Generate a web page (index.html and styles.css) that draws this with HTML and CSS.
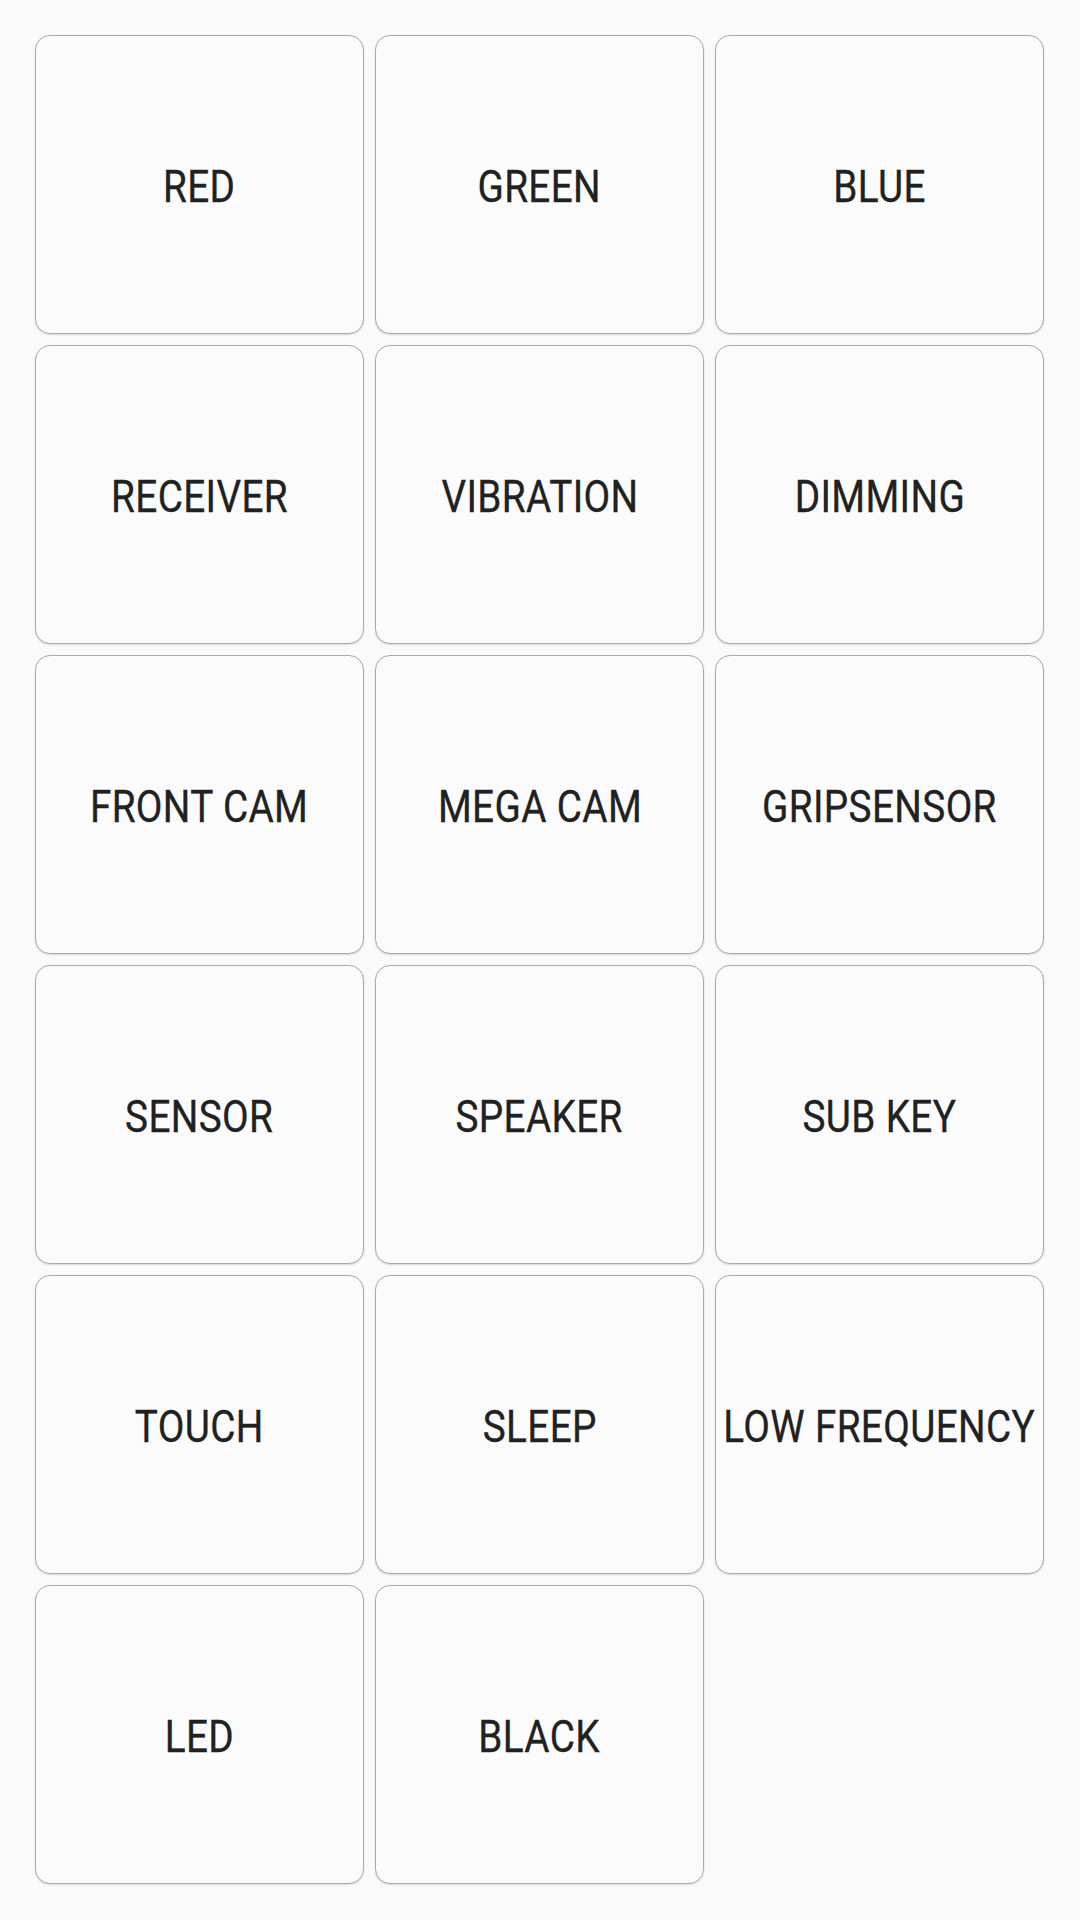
FILE: index.html
```html
<!DOCTYPE html>
<html>
<head>
<meta charset="utf-8">
<link rel="stylesheet" href="styles.css">
</head>
<body>
<div class="grid">
  <div class="card"><span class="label">RED</span></div>
  <div class="card"><span class="label">GREEN</span></div>
  <div class="card"><span class="label">BLUE</span></div>
  <div class="card"><span class="label">RECEIVER</span></div>
  <div class="card"><span class="label">VIBRATION</span></div>
  <div class="card"><span class="label">DIMMING</span></div>
  <div class="card"><span class="label">FRONT CAM</span></div>
  <div class="card"><span class="label">MEGA CAM</span></div>
  <div class="card"><span class="label">GRIPSENSOR</span></div>
  <div class="card"><span class="label">SENSOR</span></div>
  <div class="card"><span class="label">SPEAKER</span></div>
  <div class="card"><span class="label">SUB KEY</span></div>
  <div class="card"><span class="label">TOUCH</span></div>
  <div class="card"><span class="label">SLEEP</span></div>
  <div class="card"><span class="label">LOW FREQUENCY</span></div>
  <div class="card"><span class="label">LED</span></div>
  <div class="card"><span class="label">BLACK</span></div>
</div>
</body>
</html>
```

FILE: styles.css
```css
html, body {
  margin: 0;
  padding: 0;
  background: #fafafa;
}
body {
  width: 1080px;
  height: 1920px;
  font-family: Roboto, "Noto Sans", sans-serif;
}
.grid {
  display: grid;
  grid-template-columns: repeat(3, 329px);
  grid-auto-rows: 299px;
  gap: 11px;
  padding: 35px 0 0 35px;
}
.card {
  box-sizing: border-box;
  border: 1.5px solid #aaaaaa;
  border-radius: 15px;
  background: #fbfbfb;
  box-shadow: 0 1px 2px rgba(0, 0, 0, 0.14);
  display: flex;
  align-items: center;
  justify-content: center;
  padding-top: 5px;
  overflow: visible;
}
.label {
  display: inline-block;
  font-size: 44px;
  color: #212121;
  white-space: nowrap;
  transform: scaleX(0.88);
  letter-spacing: 0.4px;
  -webkit-text-stroke: 0.3px #212121;
}
```
